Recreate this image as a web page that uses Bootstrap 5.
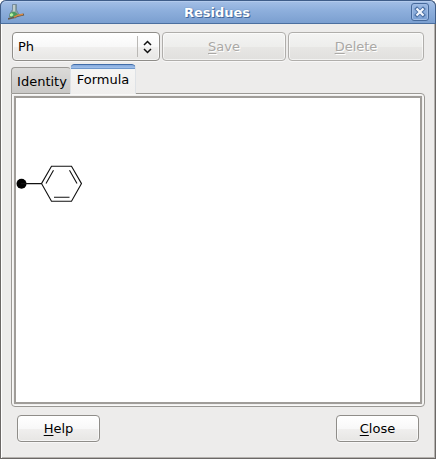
<!DOCTYPE html>
<html lang="en">
<head>
<meta charset="utf-8">
<title>Residues</title>
<meta name="viewport" content="width=device-width, initial-scale=1">
<link href="https://cdn.jsdelivr.net/npm/bootstrap@5.3.0/dist/css/bootstrap.min.css" rel="stylesheet">
<style>
body{background:#fff;font:13px/16px "DejaVu Sans",sans-serif;color:#000;overflow:hidden}
.window{width:436px;height:459px;background:#edeceb;border:1px solid #6b6866;border-top:0;border-radius:6px 6px 0 0;box-shadow:inset 1px 0 #fff,inset -1px -1px #b5b2af}
.titlebar{height:24px;margin:0 -1px;padding:0 6px 0 7px;border:1px solid #3f5d89;border-bottom-color:#4b6f9f;border-radius:6px 6px 0 0;background:linear-gradient(#a4bfe6,#8fb0dd 40%,#7b9fd0 );box-shadow:inset 0 1px #b3cbed}
.titlebar h1{font-size:13px;line-height:16px;font-weight:700;color:#fff;text-shadow:1px 1px #426799,0 0 1px #426799;padding:1px 3px 0 0}
.close-box{width:18px;height:18px;border:1px solid #46699b;border-radius:3px;background:linear-gradient(#9bb9e3,#799fd3);box-shadow:inset 0 0 0 1px #a0bce4}
.toolbar-row{padding:8px 11px 0;gap:2px}
.btn.gtk{--bs-btn-padding-x:0;--bs-btn-padding-y:0;font-size:13px;line-height:16px;height:29px;border:1px solid #8f8d89;border-radius:4px;background:linear-gradient(#fff,#f8f8f8 50%,#f0efee 52%,#e7e6e4);color:#000;box-shadow:0 1px #f8f7f7,inset 0 0 0 1px #fff9}
.btn.gtk:disabled{opacity:1;color:#aaa8a5;border-color:#b0aeab;background:linear-gradient(#f4f4f3,#eeeeec 50%,#e7e6e4 52%,#e1e0de);text-shadow:1px 1px #fff}
.btn.gtk u{text-underline-offset:2px;text-decoration-thickness:1px;text-decoration-skip-ink:none}
.btn.combo{width:148px;padding:0 6px 0 5px}
.combo .rule{width:1px;height:21px;background:#bab8b5}
.save{width:124px}.delete{width:136px}
.tabs{height:30px;padding-left:10px;margin-top:3px}
.nav-tabs.tabs{border:0}
.tabs .nav-link{padding:0;margin:0;color:#000;border:1px solid #9b9995;border-bottom:0;border-radius:4px 4px 0 0;text-align:center;line-height:16px}
.tabs .identity{width:60px;height:26px;margin-bottom:1px;background:linear-gradient(#dcdbd9,#c9c8c6);padding:6px 0 0 1px;border-right:0}
.tabs .nav-link.active{width:66px;height:30px;margin-left:-1px;background:linear-gradient(#f6f6f5,#f0efee);border-top:0;padding-top:8px;z-index:2;overflow:hidden;position:relative;color:#000}
.accent{height:5px;margin:-8px -1px 3px;background:linear-gradient(#86aadd,#a0c0ea);border:1px solid #426da9;border-bottom-color:#6f98cd;border-radius:4px 4px 0 0}
.pane{width:414px;height:314px;margin:-1px 0 0 10px;border:1px solid #9b9995;border-radius:0 4px 4px 4px;padding:2px;box-shadow:inset 0 0 0 1px #f9f9f8;background:#f0efee}
.sheet{height:308px;border:2px solid #a09d99;background:#fff}
.actions{padding:8px 16px 0}
.btn.gtk.act{width:83px;height:27px}
</style>
</head>
<body>
<main class="window d-flex flex-column">
<header class="titlebar d-flex align-items-center justify-content-between flex-shrink-0">
<svg width="18" height="18" viewBox="0 0 18 18"><path d="M4.500 1.500h4v5.500l3 5.500-4 2.500-6-1 .5-3.500 2.500-4z" fill="#8ba1a0" stroke="#6c8495" stroke-width=".8"/><path d="M5 2h2v6l-1 2h-1z" fill="#c0cdcc"/><path d="M2 10l4-1.500 4.500 3-1 2-4 1.500-4-1.500z" fill="#4b9a60"/><path d="M2 11l2-1 1.500 2-2 1.500-1.500-.5z" fill="#b5f5a4"/><path d="M0 16l6-1.500 3-1.500 7-1.500" fill="none" stroke="#655c50" stroke-width="1.800"/><path d="M6 14.200l4-2 5-1" fill="none" stroke="#d98a45" stroke-width="1.400"/></svg>
<h1 class="m-0">Residues</h1>
<span class="close-box d-flex align-items-center justify-content-center"><svg width="12" height="12" viewBox="0 0 12 12"><path d="M3 3l6 6m0-6l-6 6" stroke="#4a6fa3" stroke-width="4" stroke-linecap="square"/><path d="M3.300 3.300l5.400 5.400m0-5.400l-5.400 5.400" stroke="#f2f6fd" stroke-width="2.300" stroke-linecap="square"/></svg></span>
</header>
<div class="toolbar-row d-flex flex-shrink-0">
<button class="btn gtk combo d-flex align-items-center" type="button"><span class="me-auto">Ph</span><span class="rule"></span><svg class="ms-1" width="11" height="14" viewBox="0 0 11 14"><path d="M2 5l3.500-3.500L9 5M2 9l3.500 3.500L9 9" fill="none" stroke="#111" stroke-width="1.500"/></svg></button>
<button class="btn gtk save" type="button" disabled><u>S</u>ave</button>
<button class="btn gtk delete" type="button" disabled><u>D</u>elete</button>
</div>
<nav class="nav nav-tabs tabs align-items-end flex-nowrap flex-shrink-0">
<a class="nav-link identity">Identity</a>
<a class="nav-link active"><div class="accent"></div>Formula</a>
</nav>
<section class="pane flex-shrink-0"><div class="sheet"><svg class="d-block" width="100" height="150" viewBox="16 98 100 150" fill="none" stroke="#111" stroke-width="1.100"><circle cx="21.500" cy="183.700" r="5" fill="#000" stroke="none"/><path d="M21 183.600H41.500L51.500 166.300H71.500L81.500 183.600L71.500 201.200H51.500L41.500 183.600M46 183.600L53.500 170.200M69.500 170.200L77 183.600M54 197.300H69.500"/></svg></div></section>
<footer class="actions d-flex justify-content-between">
<button class="btn gtk act" type="button"><u>H</u>elp</button>
<button class="btn gtk act" type="button"><u>C</u>lose</button>
</footer>
</main>
<script src="https://cdn.jsdelivr.net/npm/bootstrap@5.3.0/dist/js/bootstrap.bundle.min.js"></script>
</body>
</html>
